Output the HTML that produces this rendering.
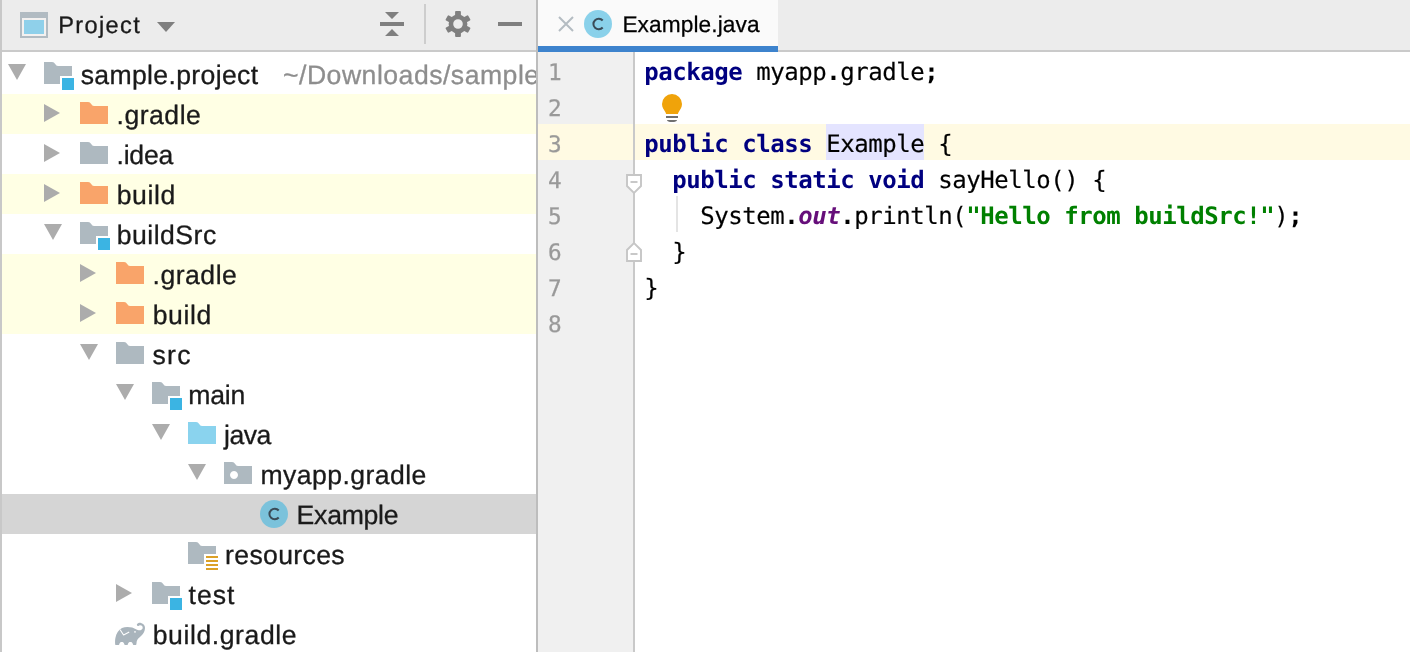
<!DOCTYPE html>
<html lang="en">
<head>
<meta charset="utf-8">
<title>Example.java - sample.project</title>
<style>
html,body{margin:0;padding:0;}
body{width:1410px;height:652px;overflow:hidden;background:#fff;position:relative;font-family:"Liberation Sans", sans-serif;color:#1d1d1d;text-rendering:geometricPrecision;}
*{box-sizing:border-box;}
.abs{position:absolute;}
.ic{position:absolute;display:block;overflow:visible;}
#app{position:absolute;left:0;top:0;width:1410px;height:652px;overflow:hidden;will-change:transform;}
#strip{left:0;top:0;width:2px;height:652px;background:#c8c8c8;}
#phead{left:2px;top:0;width:534px;height:50px;background:#ececec;}
#pheadb{left:2px;top:50px;width:534px;height:2px;background:#cacaca;}
#divider{left:536px;top:0;width:2px;height:652px;background:#bdbdbd;}
#tabs{left:538px;top:0;width:872px;height:50px;background:#ececec;}
#tabsb{left:538px;top:50px;width:872px;height:2px;background:#cacaca;}
#tab{left:538px;top:0;width:240px;height:46px;background:#fafafa;}
#tabu{left:538px;top:46px;width:240px;height:6px;background:#3d83cd;}
#gutter{left:538px;top:52px;width:95px;height:600px;background:#f0f0f0;}
#gutterb{left:633px;top:52px;width:2px;height:600px;background:#c9c9c9;}
#tree{left:2px;top:52px;width:534px;height:600px;background:#fff;overflow:hidden;}
.row{position:absolute;left:0;width:534px;height:40px;}
.row.ybg{background:#ffffe4;}
.row.sel{background:#d5d5d5;}
.lbl{position:absolute;white-space:nowrap;font-size:26.6px;letter-spacing:0.5px;line-height:40px;height:40px;top:1px;color:#1a1a1a;-webkit-text-stroke:0.3px #1a1a1a;}
.path{-webkit-text-stroke:0.3px #8e8e8e;}
.path{color:#8e8e8e;}
.title{position:absolute;left:58.2px;top:6px;font-size:23.6px;letter-spacing:1.36px;line-height:40px;white-space:nowrap;color:#1a1a1a;-webkit-text-stroke:0.3px #1a1a1a;}
.tabt{position:absolute;left:622.4px;top:4px;font-size:22.7px;letter-spacing:0.09px;line-height:40px;white-space:nowrap;color:#000;-webkit-text-stroke:0.25px #000;}
.ln{position:absolute;left:547.9px;width:40px;font-family:"DejaVu Sans Mono", "Liberation Mono", monospace;font-size:22.7px;line-height:36px;height:36px;color:#999;-webkit-text-stroke:0.25px #999;}
.code{position:absolute;left:644.2px;font-family:"DejaVu Sans Mono", "Liberation Mono", monospace;font-size:24px;letter-spacing:-0.449px;line-height:36px;height:36px;white-space:pre;color:#000;-webkit-text-stroke:0.18px currentColor;}
.k{color:#000080;font-weight:bold;-webkit-text-stroke:0;}
.b{font-weight:bold;-webkit-text-stroke:0;}
.s{color:#008000;font-weight:bold;-webkit-text-stroke:0;}
.f{color:#660e7a;font-weight:bold;font-style:italic;-webkit-text-stroke:0;}
#hl{left:825.5px;top:124px;width:98px;height:36px;background:#e4e4ff;}
#caret{left:538px;top:124px;width:872px;height:36px;background:#fffae3;}
</style>
</head>
<body>
<div id="app">

<div class="abs" id="strip"></div>
<div class="abs" id="phead"></div><div class="abs" id="pheadb"></div>
<svg class="ic" style="left:20px;top:12px" width="28" height="26" viewBox="0 0 28 26"><rect x="0" y="0" width="28" height="26" fill="#b1bbc2"/><rect x="2" y="6" width="24" height="18" fill="#f3f1f0"/><rect x="4" y="8" width="20" height="14" fill="#8fd0ea"/></svg>
<div class="title">Project</div>
<svg class="ic" style="left:157px;top:22px" width="18" height="10" viewBox="0 0 18 10"><path d="M0 0H18L9 10Z" fill="#7f7f7f"/></svg>
<svg class="ic" style="left:380px;top:12px" width="24" height="24" viewBox="0 0 24 24"><path d="M5 0H19L12 7Z M0 10H24V14H0Z M5 24H19L12 17Z" fill="#7f7f7f"/></svg>
<div class="abs" style="left:424px;top:4px;width:2px;height:40px;background:#cdcdcd"></div>
<svg class="ic" style="left:445px;top:11px" width="26" height="26" viewBox="0 0 26 26"><g fill="#7f7f7f"><rect x="10.1" y="0" width="5.800" height="5.500" rx="0.9" transform="rotate(0 13 13)"/><rect x="10.1" y="0" width="5.800" height="5.500" rx="0.9" transform="rotate(60 13 13)"/><rect x="10.1" y="0" width="5.800" height="5.500" rx="0.9" transform="rotate(120 13 13)"/><rect x="10.1" y="0" width="5.800" height="5.500" rx="0.9" transform="rotate(180 13 13)"/><rect x="10.1" y="0" width="5.800" height="5.500" rx="0.9" transform="rotate(240 13 13)"/><rect x="10.1" y="0" width="5.800" height="5.500" rx="0.9" transform="rotate(300 13 13)"/></g><circle cx="13" cy="13" r="7.100" fill="none" stroke="#7f7f7f" stroke-width="4.600"/></svg>
<div class="abs" style="left:498px;top:22px;width:24px;height:4px;background:#7f7f7f"></div>
<div class="abs" id="tree">
<div class="row" style="top:2px">
<svg class="ic" style="left:6px;top:10px" width="18" height="16" viewBox="0 0 18 16"><path d="M0 0H18L9 16Z" fill="#acacac"/></svg>
<svg class="ic" style="left:40px;top:4px" width="32" height="32" viewBox="0 0 32 32"><path d="M2 4H10C11.6 4 12.3 4.900 13.2 6C14 7 14.6 8 16 8H30V18H18V26H2Z" fill="#aeb9c0"/><rect x="20" y="20" width="12" height="12" fill="#3bb4e3"/></svg>
<span class="lbl" style="left:78.7px;letter-spacing:0.34px">sample.project</span>
<span class="lbl path" style="left:281px;">~/Downloads/sample.project</span>
</div>
<div class="row ybg" style="top:42px">
<svg class="ic" style="left:42px;top:10px" width="16" height="18" viewBox="0 0 16 18"><path d="M0 0V18L16 9Z" fill="#acacac"/></svg>
<svg class="ic" style="left:76px;top:4px" width="32" height="32" viewBox="0 0 32 32"><path d="M2 4H10C11.6 4 12.3 4.900 13.2 6C14 7 14.6 8 16 8H30V26H2Z" fill="#f9a46a"/></svg>
<span class="lbl" style="left:114.5px;letter-spacing:0.51px">.gradle</span>
</div>
<div class="row" style="top:82px">
<svg class="ic" style="left:42px;top:10px" width="16" height="18" viewBox="0 0 16 18"><path d="M0 0V18L16 9Z" fill="#acacac"/></svg>
<svg class="ic" style="left:76px;top:4px" width="32" height="32" viewBox="0 0 32 32"><path d="M2 4H10C11.6 4 12.3 4.900 13.2 6C14 7 14.6 8 16 8H30V26H2Z" fill="#aeb9c0"/></svg>
<span class="lbl" style="left:114.5px;letter-spacing:-0.22px">.idea</span>
</div>
<div class="row ybg" style="top:122px">
<svg class="ic" style="left:42px;top:10px" width="16" height="18" viewBox="0 0 16 18"><path d="M0 0V18L16 9Z" fill="#acacac"/></svg>
<svg class="ic" style="left:76px;top:4px" width="32" height="32" viewBox="0 0 32 32"><path d="M2 4H10C11.6 4 12.3 4.900 13.2 6C14 7 14.6 8 16 8H30V26H2Z" fill="#f9a46a"/></svg>
<span class="lbl" style="left:114.7px;letter-spacing:0.58px">build</span>
</div>
<div class="row" style="top:162px">
<svg class="ic" style="left:42px;top:10px" width="18" height="16" viewBox="0 0 18 16"><path d="M0 0H18L9 16Z" fill="#acacac"/></svg>
<svg class="ic" style="left:76px;top:4px" width="32" height="32" viewBox="0 0 32 32"><path d="M2 4H10C11.6 4 12.3 4.900 13.2 6C14 7 14.6 8 16 8H30V18H18V26H2Z" fill="#aeb9c0"/><rect x="20" y="20" width="12" height="12" fill="#3bb4e3"/></svg>
<span class="lbl" style="left:114.7px;letter-spacing:0.49px">buildSrc</span>
</div>
<div class="row ybg" style="top:202px">
<svg class="ic" style="left:78px;top:10px" width="16" height="18" viewBox="0 0 16 18"><path d="M0 0V18L16 9Z" fill="#acacac"/></svg>
<svg class="ic" style="left:112px;top:4px" width="32" height="32" viewBox="0 0 32 32"><path d="M2 4H10C11.6 4 12.3 4.900 13.2 6C14 7 14.6 8 16 8H30V26H2Z" fill="#f9a46a"/></svg>
<span class="lbl" style="left:150.5px;letter-spacing:0.51px">.gradle</span>
</div>
<div class="row ybg" style="top:242px">
<svg class="ic" style="left:78px;top:10px" width="16" height="18" viewBox="0 0 16 18"><path d="M0 0V18L16 9Z" fill="#acacac"/></svg>
<svg class="ic" style="left:112px;top:4px" width="32" height="32" viewBox="0 0 32 32"><path d="M2 4H10C11.6 4 12.3 4.900 13.2 6C14 7 14.6 8 16 8H30V26H2Z" fill="#f9a46a"/></svg>
<span class="lbl" style="left:150.7px;letter-spacing:0.58px">build</span>
</div>
<div class="row" style="top:282px">
<svg class="ic" style="left:78px;top:10px" width="18" height="16" viewBox="0 0 18 16"><path d="M0 0H18L9 16Z" fill="#acacac"/></svg>
<svg class="ic" style="left:112px;top:4px" width="32" height="32" viewBox="0 0 32 32"><path d="M2 4H10C11.6 4 12.3 4.900 13.2 6C14 7 14.6 8 16 8H30V26H2Z" fill="#aeb9c0"/></svg>
<span class="lbl" style="left:150.5px;letter-spacing:1.25px">src</span>
</div>
<div class="row" style="top:322px">
<svg class="ic" style="left:114px;top:10px" width="18" height="16" viewBox="0 0 18 16"><path d="M0 0H18L9 16Z" fill="#acacac"/></svg>
<svg class="ic" style="left:148px;top:4px" width="32" height="32" viewBox="0 0 32 32"><path d="M2 4H10C11.6 4 12.3 4.900 13.2 6C14 7 14.6 8 16 8H30V18H18V26H2Z" fill="#aeb9c0"/><rect x="20" y="20" width="12" height="12" fill="#3bb4e3"/></svg>
<span class="lbl" style="left:186.3px;letter-spacing:-0.2px">main</span>
</div>
<div class="row" style="top:362px">
<svg class="ic" style="left:150px;top:10px" width="18" height="16" viewBox="0 0 18 16"><path d="M0 0H18L9 16Z" fill="#acacac"/></svg>
<svg class="ic" style="left:184px;top:4px" width="32" height="32" viewBox="0 0 32 32"><path d="M2 4H10C11.6 4 12.3 4.900 13.2 6C14 7 14.6 8 16 8H30V26H2Z" fill="#8ad3ee"/></svg>
<span class="lbl" style="left:222.0px;letter-spacing:-0.48px">java</span>
</div>
<div class="row" style="top:402px">
<svg class="ic" style="left:186px;top:10px" width="18" height="16" viewBox="0 0 18 16"><path d="M0 0H18L9 16Z" fill="#acacac"/></svg>
<svg class="ic" style="left:220px;top:4px" width="32" height="32" viewBox="0 0 32 32"><path fill-rule="evenodd" d="M2 4H10C11.6 4 12.3 4.900 13.2 6C14 7 14.6 8 16 8H30V26H2Z M12 13a4 4 0 1 0 0.01 0Z" fill="#aeb9c0"/></svg>
<span class="lbl" style="left:258.5px;letter-spacing:0.43px">myapp.gradle</span>
</div>
<div class="row sel" style="top:442px">
<svg class="ic" style="left:256px;top:4px" width="32" height="32" viewBox="0 0 32 32"><circle cx="16" cy="16" r="14" fill="#40b6e0" fill-opacity="0.6"/><path d="M20.7 12.5A5.3 5.3 0 1 0 20.7 19.5" fill="none" stroke="#3a4b57" stroke-width="2"/></svg>
<span class="lbl" style="left:294.6px;letter-spacing:-0.25px">Example</span>
</div>
<div class="row" style="top:482px">
<svg class="ic" style="left:184px;top:4px" width="32" height="32" viewBox="0 0 32 32"><path d="M2 4H10C11.6 4 12.3 4.900 13.2 6C14 7 14.6 8 16 8H30V16H18V26H2Z" fill="#aeb9c0"/><path d="M20 18H32V20H20ZM20 22H32V24H20ZM20 26H32V28H20ZM20 30H32V32H20Z" fill="#dca127"/></svg>
<span class="lbl" style="left:223.1px;letter-spacing:0.34px">resources</span>
</div>
<div class="row" style="top:522px">
<svg class="ic" style="left:114px;top:10px" width="16" height="18" viewBox="0 0 16 18"><path d="M0 0V18L16 9Z" fill="#acacac"/></svg>
<svg class="ic" style="left:148px;top:4px" width="32" height="32" viewBox="0 0 32 32"><path d="M2 4H10C11.6 4 12.3 4.900 13.2 6C14 7 14.6 8 16 8H30V18H18V26H2Z" fill="#aeb9c0"/><rect x="20" y="20" width="12" height="12" fill="#3bb4e3"/></svg>
<span class="lbl" style="left:186.6px;letter-spacing:1.0px">test</span>
</div>
<div class="row" style="top:562px">
<svg class="ic" style="left:112px;top:4px" width="32" height="32" viewBox="0 0 32 32"><path d="M1.2 26.8C1 24 1 22 1.4 20C2.200 15.5 4.5 11.8 8 10C11 8.6 15 8.6 18.2 9.6C20.5 10.3 22.5 12 24.6 12.3C26.8 12.6 28.8 11.3 28.7 9.4C28.6 7.6 26.8 6.9 25.3 7.4C24.6 7.7 24.1 8.2 23.6 8C22.9 7.7 22.6 6.8 23.1 6.1C24 5 25.6 4.6 27 4.9C29.4 5.4 31.1 7.4 31 10C30.9 13 29.5 15.500 27.5 17.5C25.5 19.5 23.2 21 22.7 23.5L22.4 26.3Q22.3 26.9 21.7 26.9L19.6 26.9Q19 26.9 18.9 26.3C18.6 24.6 17.6 24 16.4 24C15.2 24 14.2 24.6 13.9 26.3Q13.8 26.9 13.2 26.9L11 26.9Q10.4 26.9 10.3 26.3C10 24.6 9 24 7.8 24C6.600 24 5.6 24.6 5.3 26.3Q5.2 26.9 4.6 26.9L1.9 26.9Q1.3 26.9 1.2 26.8Z" fill="#a9b4bc"/><path d="M6.3 12L9.6 17L14.8 14.2" fill="none" stroke="#fff" stroke-width="1.1" stroke-linecap="round" stroke-linejoin="round"/><circle cx="21" cy="13.9" r="0.8" fill="#fff"/></svg>
<span class="lbl" style="left:150.7px;letter-spacing:0.58px">build.gradle</span>
</div>
</div>
<div class="abs" id="divider"></div>
<div class="abs" id="tabs"></div><div class="abs" id="tabsb"></div>
<div class="abs" id="tab"></div><div class="abs" id="tabu"></div>
<svg class="ic" style="left:558px;top:16px" width="16" height="16" viewBox="0 0 16 16"><path d="M1 1L15 15M15 1L1 15" stroke="#b4bcc2" stroke-width="2" fill="none"/></svg>
<svg class="ic" style="left:582px;top:8px" width="32" height="32" viewBox="0 0 32 32"><circle cx="16" cy="16" r="14" fill="#40b6e0" fill-opacity="0.6"/><path d="M20.7 12.5A5.3 5.3 0 1 0 20.7 19.5" fill="none" stroke="#3a4b57" stroke-width="2"/></svg>
<div class="tabt">Example.java</div>
<div class="abs" id="gutter"></div>
<div class="abs" id="caret"></div><div class="abs" id="hl"></div>
<div class="abs" id="gutterb"></div>
<div class="ln" style="top:55.4px">1</div>
<div class="code" style="top:54.0px"><span class="k">package</span> myapp<span class="b">.</span>gradle<span class="b">;</span></div>
<div class="ln" style="top:91.4px">2</div>
<div class="code" style="top:90.0px"></div>
<div class="ln" style="top:127.4px">3</div>
<div class="code" style="top:126.0px"><span class="k">public</span> <span class="k">class</span> Example {</div>
<div class="ln" style="top:163.4px">4</div>
<div class="code" style="top:162.0px">  <span class="k">public</span> <span class="k">static</span> <span class="k">void</span> sayHello() {</div>
<div class="ln" style="top:199.4px">5</div>
<div class="code" style="top:198.0px">    System<span class="b">.</span><span class="f">out</span><span class="b">.</span>println(<span class="s">"Hello from buildSrc!"</span>)<span class="b">;</span></div>
<div class="ln" style="top:235.4px">6</div>
<div class="code" style="top:234.0px">  }</div>
<div class="ln" style="top:271.4px">7</div>
<div class="code" style="top:270.0px">}</div>
<div class="ln" style="top:307.4px">8</div>
<div class="code" style="top:306.0px"></div>
<div class="abs" style="left:675.7px;top:196px;width:2px;height:36px;background:#e4e4e4"></div>
<svg class="ic" style="left:626px;top:173.8px" width="16" height="20" viewBox="0 0 16 20"><path d="M1 1H15V12L8 19L1 12Z" fill="#fff" stroke="#c6c6c6" stroke-width="1.9"/><path d="M4.5 8H11.5" stroke="#c6c6c6" stroke-width="1.9"/></svg>
<svg class="ic" style="left:626px;top:242px" width="16" height="20" viewBox="0 0 16 20"><path d="M1 19H15V8L8 1L1 8Z" fill="#fff" stroke="#c6c6c6" stroke-width="1.9"/><path d="M4.5 12H11.5" stroke="#c6c6c6" stroke-width="1.9"/></svg>
<svg class="ic" style="left:660px;top:93px" width="24" height="30" viewBox="0 0 24 30"><path d="M12 1a10 10 0 0 1 10 10c0 3.600-2 5.800-3.300 7.900c-.4.600-.7 1.300-.7 2.100H6c0-.8-.3-1.500-.7-2.100C4 16.800 2 14.600 2 11A10 10 0 0 1 12 1Z" fill="#f0a30a"/><path d="M6 23H18V25H6Z M7 27H17Q16.700 29 12 29Q7.300 29 7 27Z" fill="#707070"/></svg>
</div>
</body></html>
